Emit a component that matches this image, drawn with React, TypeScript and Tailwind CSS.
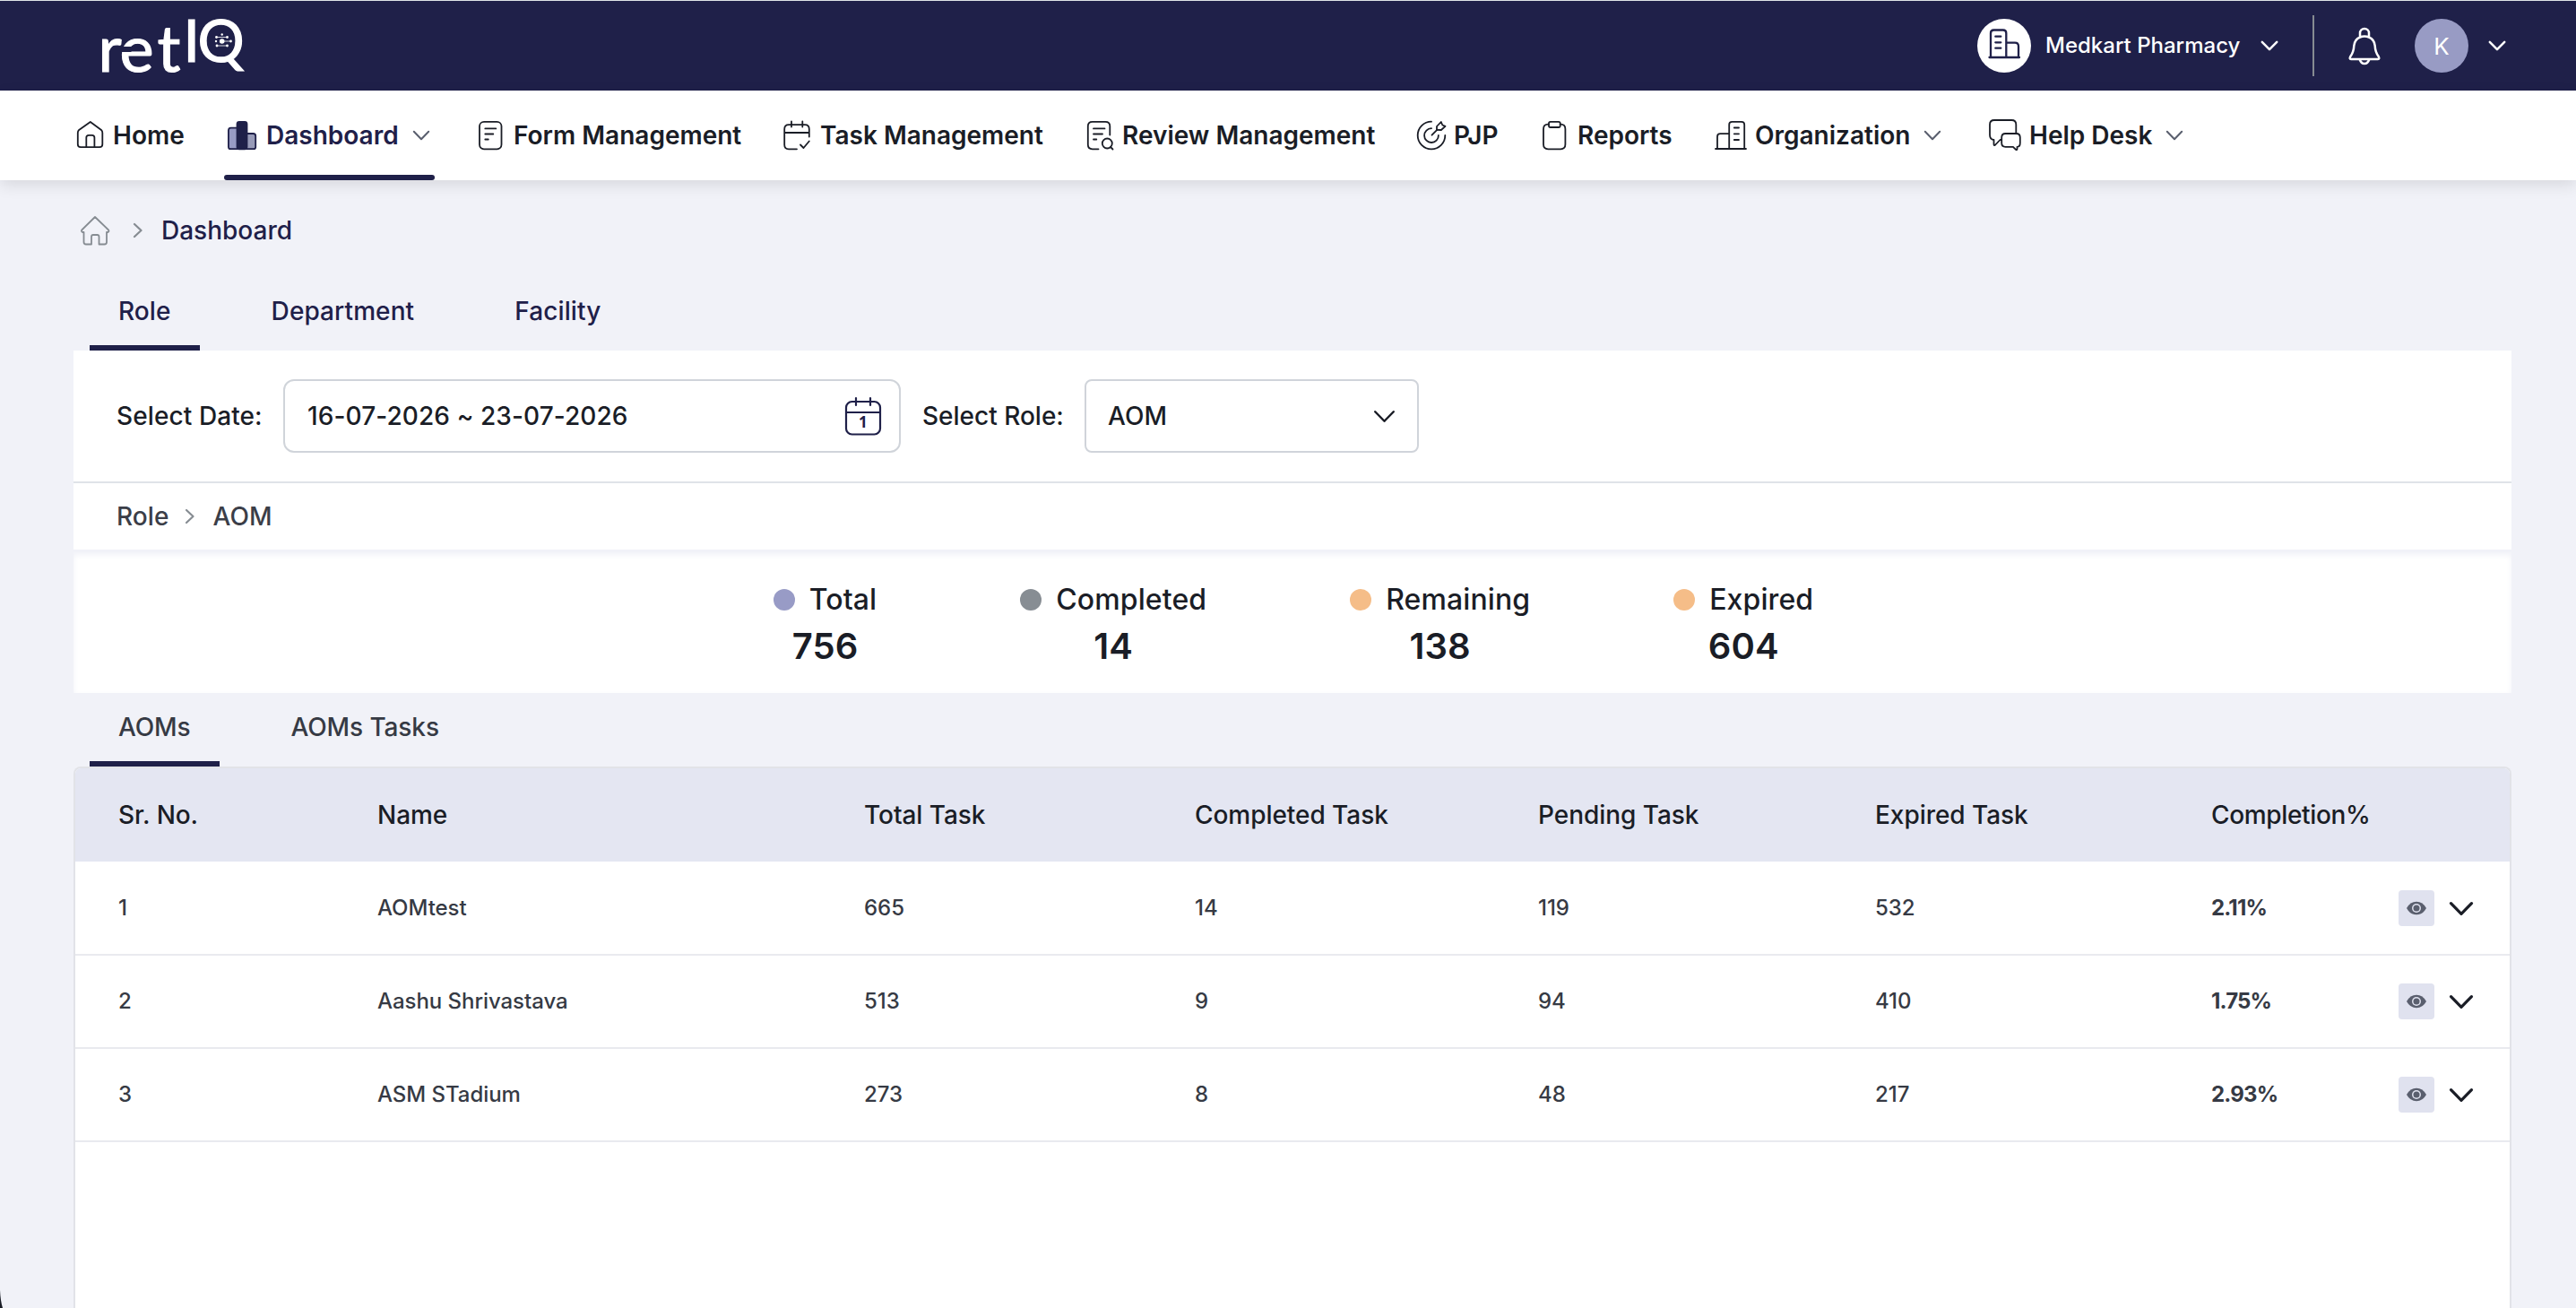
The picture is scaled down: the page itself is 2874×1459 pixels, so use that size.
import React, { useState } from 'react';

interface NavItem {
  label: string;
  width: string;
  gap: string;
  icon: React.ReactNode;
  active?: boolean;
  hasMenu?: boolean;
}

interface StatItem {
  label: string;
  value: number;
  dot: string;
}

interface TaskRow {
  id: number;
  name: string;
  total: number;
  completed: number;
  pending: number;
  expired: number;
  completion: string;
}

interface TabsProps {
  items: string[];
  active: string;
  onChange: (tab: string) => void;
  className: string;
}

const NavIcon: React.FC<{ children: React.ReactNode }> = ({ children }) => (
  <svg
    viewBox="0 0 40 40"
    className="w-10 h-10 shrink-0"
    fill="none"
    stroke="currentColor"
    strokeWidth="1.8"
    strokeLinecap="round"
    strokeLinejoin="round"
  >
    {children}
  </svg>
);

const ChevronDown: React.FC<{ className: string; strokeWidth?: number }> = ({ className, strokeWidth = 2 }) => (
  <svg
    viewBox="0 0 20 12"
    className={className}
    fill="none"
    stroke="currentColor"
    strokeWidth={strokeWidth}
    strokeLinecap="round"
    strokeLinejoin="round"
  >
    <path d="M1.8 1.8 10 10.2 18.2 1.8" />
  </svg>
);

const ChevronRight: React.FC = () => (
  <svg
    viewBox="0 0 12 18"
    className="w-3 h-[18px] shrink-0 text-[#868c92]"
    fill="none"
    stroke="currentColor"
    strokeWidth="2.2"
    strokeLinecap="round"
    strokeLinejoin="round"
  >
    <path d="M2 2 9.5 9 2 16" />
  </svg>
);

const navItems: NavItem[] = [
  {
    label: 'Home',
    width: 'w-[170px]',
    gap: 'ml-[6px]',
    icon: (
      <NavIcon>
        <path d="M20.8 5 33 14q1.3 1.2 1.3 3v13q0 3.2-3.2 3.2H10q-3.2 0-3.2-3.2V17q0-1.8 1.3-3Z" />
        <path d="M16.3 33V22.5q0-2.7 2.7-2.7h3.7q2.7 0 2.7 2.7V33" />
      </NavIcon>
    ),
  },
  {
    label: 'Dashboard',
    width: 'w-[277px]',
    gap: 'ml-[7px]',
    active: true,
    hasMenu: true,
    icon: (
      <NavIcon>
        <path d="M15 11.7H7.5q-2.6 0-2.6 2.6V33q0 2.2 2.2 2.2H15Z" fill="#989bc4" />
        <path d="M25 18h7.5q2.7 0 2.7 2.7V33q0 2.2-2.2 2.2h-8Z" fill="#989bb8" />
        <rect x="14.5" y="4.8" width="11" height="30.5" rx="2.5" fill="currentColor" />
      </NavIcon>
    ),
  },
  {
    label: 'Form Management',
    width: 'w-[343px]',
    gap: 'ml-[6px]',
    icon: (
      <NavIcon>
        <rect x="8" y="4.8" width="24.5" height="30.5" rx="5" />
        <path d="M14.3 12.4h12M14.3 18.5h9M14.3 24.5h3.5" />
      </NavIcon>
    ),
  },
  {
    label: 'Task Management',
    width: 'w-[338px]',
    gap: 'ml-[5px]',
    icon: (
      <NavIcon>
        <path d="M32.8 21.5V13q0-4.8-4.8-4.8H10q-4.8 0-4.8 4.8v17.5q0 4.8 4.8 4.8h9M5.2 17h27.6M13 4.5v6M25.3 4.5v6" />
        <path d="m23 30.5 3.5 3.5 6.3-7.5" />
      </NavIcon>
    ),
  },
  {
    label: 'Review Management',
    width: 'w-[369px]',
    gap: 'ml-[4px]',
    icon: (
      <NavIcon>
        <path d="M30.3 19.5V9.8q0-5-5-5H10.8q-5 0-5 5v20.5q0 5 5 5H17.5" />
        <path d="M12 12.4h12.5M12 18.5h10M12 24.5h3.3" />
        <circle cx="27.3" cy="29" r="5.5" />
        <path d="m31 33 2.5 2.5" />
      </NavIcon>
    ),
  },
  {
    label: 'PJP',
    width: 'w-[137px]',
    gap: 'ml-[5px]',
    icon: (
      <NavIcon>
        <path d="M20 4.7A15.3 15.3 0 1 0 35.3 20" />
        <path d="M20 12.2A7.9 7.9 0 1 0 27.9 20M20.5 19.7l6-6" />
        <path d="M26 13.8V10l4.8-5 1.5 3.5 3.2 1.3-4.6 4.2Z" />
      </NavIcon>
    ),
  },
  {
    label: 'Reports',
    width: 'w-[197px]',
    gap: 'ml-[6px]',
    icon: (
      <NavIcon>
        <path d="M14 7.7h-.8q-5.2 0-5.2 5.2v17.2q0 5.2 5.2 5.2h14q5.2 0 5.2-5.2V12.9q0-5.2-5.2-5.2h-.5" />
        <rect x="14" y="4.8" width="12.7" height="6.2" rx="1.8" />
      </NavIcon>
    ),
  },
  {
    label: 'Organization',
    width: 'w-[306px]',
    gap: 'ml-[7px]',
    hasMenu: true,
    icon: (
      <NavIcon>
        <path d="M3 35h34M5 35V21.5q0-3.3 3.3-3.3h9.7M18.2 35V8q0-3.2 3.2-3.2h10.5q3.3 0 3.3 3.2V35" />
        <path d="M23.8 11.5h5.2M23.8 18.3h5.2M23.8 25h5.2" />
      </NavIcon>
    ),
  },
  {
    label: 'Help Desk',
    width: 'w-[260px]',
    gap: 'ml-[7px]',
    hasMenu: true,
    icon: (
      <NavIcon>
        <path d="M32.3 17V8q0-5-5-5H8Q3 3 3 8v11.5q0 5 4.5 5.5v5q.3 1.8 1.7.5L14.5 25H16" />
        <path d="M20.5 18h12q4.3 0 4.3 4.3v6.2q0 4.3-3.3 4.3v2.5q-.3 1.5-1.5.5l-3-3h-8.5q-4.3 0-4.3-4.3v-6.2q0-4.3 4.3-4.3Z" />
      </NavIcon>
    ),
  },
];

const stats: StatItem[] = [
  { label: 'Total', value: 756, dot: 'bg-[#989bc6]' },
  { label: 'Completed', value: 14, dot: 'bg-[#878d93]' },
  { label: 'Remaining', value: 138, dot: 'bg-[#f5bd88]' },
  { label: 'Expired', value: 604, dot: 'bg-[#f5bd88]' },
];

const rows: TaskRow[] = [
  { id: 1, name: 'AOMtest', total: 665, completed: 14, pending: 119, expired: 532, completion: '2.11%' },
  { id: 2, name: 'Aashu Shrivastava', total: 513, completed: 9, pending: 94, expired: 410, completion: '1.75%' },
  { id: 3, name: 'ASM STadium', total: 273, completed: 8, pending: 48, expired: 217, completion: '2.93%' },
];

const columns = ['Sr. No.', 'Name', 'Total Task', 'Completed Task', 'Pending Task', 'Expired Task', 'Completion%'];

const gridColumns = 'grid grid-cols-[289px_543px_369px_383px_376px_375px_1fr] items-center pl-[48px]';

const Logo: React.FC = () => (
  <svg viewBox="0 0 180 100" className="w-[180px] h-[100px] overflow-visible" fill="#ffffff" fontFamily="Lato, sans-serif">
    <g stroke="#ffffff" strokeWidth="1.2">
      <text x="-0.5" y="79" fontSize="72">r</text>
      <text x="23.5" y="79" fontSize="72">e</text>
      <text x="65.5" y="79" fontSize="72">t</text>
      <text x="94.5" y="68" fontSize="66">I</text>
      <text x="110.5" y="68" fontSize="65">Q</text>
    </g>
    {/* notch in the e */}
    <rect x="24" y="51" width="12.5" height="6" fill="#1f2049" />
    {/* network mark inside the Q */}
    <path d="M132 40.5h11M132 50h11M138 45h9" stroke="#ffffff" strokeWidth="0.8" />
    <circle cx="137.7" cy="45" r="2.8" />
    <circle cx="137.7" cy="37.5" r="1.2" />
    <circle cx="131.5" cy="40.5" r="1.4" />
    <circle cx="143.5" cy="40.5" r="1.4" />
    <circle cx="131" cy="45" r="1.2" />
    <circle cx="147.5" cy="45" r="1.4" />
    <circle cx="132" cy="50" r="1.4" />
    <circle cx="143.5" cy="50" r="1.4" />
  </svg>
);

const Header: React.FC = () => (
  <header className="flex items-center justify-between h-[101px] bg-[#1f2049] border-t border-[#dfe4e8] pl-[110px] pr-[78px] text-white">
    <Logo />
    <div className="flex items-center">
      <div className="flex items-center justify-center w-[60px] h-[60px] rounded-full bg-white text-[#1f2049]">
        <svg
          viewBox="0 0 60 60"
          className="w-[60px] h-[60px]"
          fill="none"
          stroke="currentColor"
          strokeWidth="2.3"
          strokeLinecap="round"
          strokeLinejoin="round"
        >
          <path d="M13.5 43h33.5M15 43V16q0-3.5 3.5-3.5h10.3q3.5 0 3.5 3.5v27M32.3 26.7h9.7q4 0 4 4V43" />
          <path d="M20.3 19.7h6M20.3 26.3h6M20.3 32.7h6" />
        </svg>
      </div>
      <span className="ml-4 w-[240px] text-2xl font-medium whitespace-nowrap">Medkart Pharmacy</span>
      <ChevronDown className="w-5 h-3" strokeWidth={2.5} />
      <div className="ml-[38px] w-[2px] h-[68px] bg-[#868b91]" />
      <svg
        viewBox="0 0 40 44"
        className="ml-[36px] w-10 h-11"
        fill="none"
        stroke="currentColor"
        strokeWidth="2.5"
        strokeLinecap="round"
        strokeLinejoin="round"
      >
        <path d="M15 12.5V8a5 5 0 0 1 10 0v4.5M15 12.5q-6 2.5-6.7 9.5-.3 7-4 12-1.5 3 .7 3h30q2.2 0 .7-3-3.7-5-4-12-.7-7-6.7-9.5-5-2-10 0Z" />
        <path d="M14.8 37.5q1.5 4.5 5.2 4.5t5.2-4.5" />
      </svg>
      <div className="ml-[36px] flex items-center justify-center w-[60px] h-[60px] rounded-full bg-[#989bc4] text-[26px]">
        K
      </div>
      <ChevronDown className="ml-[22px] w-5 h-3" strokeWidth={2.5} />
    </div>
  </header>
);

const NavBar: React.FC = () => (
  <nav className="relative flex h-[100px] bg-white pl-[80px] text-[#1a1d26] shadow-[0_6px_16px_rgba(0,0,0,0.1)]">
    {navItems.map((item) => (
      <div key={item.label} className={`${item.width} shrink-0`}>
        <div className={`relative inline-flex items-center h-[100px] ${item.active ? 'text-[#1f2049]' : ''}`}>
          {item.icon}
          <span className={`${item.gap} text-[28px] font-semibold whitespace-nowrap`}>{item.label}</span>
          {item.hasMenu && <ChevronDown className="ml-[15px] w-5 h-3 text-[#5a5f6e]" />}
          {item.active && <div className="absolute left-0 bottom-0 w-[235px] h-[6px] rounded-full bg-[#1f2049]" />}
        </div>
      </div>
    ))}
  </nav>
);

const Breadcrumb: React.FC = () => (
  <div className="flex items-center h-[111px] pl-[4px]">
    <svg
      viewBox="0 0 40 40"
      className="w-10 h-10 text-[#868c92]"
      fill="none"
      stroke="currentColor"
      strokeWidth="1.8"
      strokeLinejoin="round"
    >
      <path d="M20 5 35 19.5q1 1.5-.5 2.5H33v11q0 2.5-2.5 2.5H24.5V27q0-2-2-2h-4.5q-2 0-2 2v8.5H10q-2.5 0-2.5-2.5V22H6q-1.7-1-.7-2.5Z" />
    </svg>
    <span className="ml-[22px] mr-[20px]">
      <ChevronRight />
    </span>
    <span className="tracking-normal">Dashboard</span>
  </div>
);

const Tabs: React.FC<TabsProps> = ({ items, active, onChange, className }) => (
  <div className={`flex gap-12 pl-[18px] ${className}`}>
    {items.map((item) => (
      <button
        key={item}
        onClick={() => onChange(item)}
        className={`px-8 border-b-[6px] whitespace-nowrap ${
          item === active ? 'border-[#1f2049]' : 'border-transparent'
        }`}
      >
        {item}
      </button>
    ))}
  </div>
);

const Filters: React.FC = () => (
  <div className="flex items-center h-[148px] bg-white border-b-2 border-[#dfe3e8] pl-[48px] text-[#1a1d26]">
    <label className="w-[186px] whitespace-nowrap">Select Date:</label>
    <div className="flex items-center justify-between w-[689px] h-[82px] border-2 border-[#d0d4da] rounded-xl pl-[25px] pr-[18px]">
      <span>16-07-2026 ~ 23-07-2026</span>
      <svg
        viewBox="0 0 44 44"
        className="w-11 h-11 text-[#1f2049]"
        fill="none"
        stroke="currentColor"
        strokeWidth="2.2"
        strokeLinecap="round"
      >
        <rect x="3" y="6" width="38" height="36.5" rx="6.5" />
        <path d="M3 18h38M14 2v8M30 2v8" />
        <text
          x="22"
          y="35"
          fontSize="17"
          fontWeight="700"
          textAnchor="middle"
          fill="currentColor"
          stroke="none"
          fontFamily="Noto Sans, sans-serif"
        >
          1
        </text>
      </svg>
    </div>
    <label className="ml-[24px] w-[181px] whitespace-nowrap tracking-normal">Select Role:</label>
    <div className="flex items-center justify-between w-[373px] h-[82px] border-2 border-[#d0d4da] rounded-lg px-[24px]">
      <span>AOM</span>
      <ChevronDown className="w-[25px] h-[15px]" />
    </div>
  </div>
);

const Stats: React.FC = () => (
  <div className="flex justify-center gap-40 h-[160px] bg-white border-t-[3px] border-[#f1f2f8] shadow-[inset_0_3px_6px_#f1f2f8] pt-[29px] pl-[2px] text-[#1a1d26]">
    {stats.map((stat) => (
      <div key={stat.label} className="flex flex-col items-center">
        <div className="flex items-center gap-4 h-[48px] text-[32px]">
          <span className={`w-6 h-6 rounded-full ${stat.dot}`} />
          <span>{stat.label}</span>
        </div>
        <div className="text-[40px] leading-[56px] font-semibold">{stat.value}</div>
      </div>
    ))}
  </div>
);

const TaskTable: React.FC = () => (
  <div className="h-[604px] bg-white border-2 border-b-0 border-[#e2e3e8] rounded-t-lg">
    <div className={`${gridColumns} h-[104px] rounded-t-md bg-[#e4e6f2] tracking-[-0.05px] text-[#1a1d26]`}>
      {columns.map((column) => (
        <div key={column} className="last:tracking-[-0.35px]">
          {column}
        </div>
      ))}
    </div>
    <div className="pt-px">
      {rows.map((row) => (
        <div
          key={row.id}
          className={`${gridColumns} h-[104px] border-b-2 border-[#e9eaef] text-2xl tracking-[-0.05px] text-[#363a44]`}
        >
          <div>{row.id}</div>
          <div>{row.name}</div>
          <div>{row.total}</div>
          <div>{row.completed}</div>
          <div>{row.pending}</div>
          <div>{row.expired}</div>
          <div className="flex items-center">
            <span className="w-[209px] font-bold tracking-[-0.8px]">{row.completion}</span>
            <button className="flex items-center justify-center w-10 h-10 rounded-sm bg-[#e0e2ef]">
              <svg viewBox="0 0 24 16" className="w-6 h-4">
                <path d="M1 8Q5 .7 12 .7T23 8q-4 7.3-11 7.3T1 8Z" fill="#5a5f6e" />
                <circle cx="12" cy="8" r="5" fill="#e0e2ef" />
                <circle cx="12" cy="8" r="3.5" fill="#5a5f6e" />
              </svg>
            </button>
            <ChevronDown className="ml-[16px] w-[28px] h-[17px] text-[#1a1d26]" strokeWidth={2.3} />
          </div>
        </div>
      ))}
    </div>
  </div>
);

const App: React.FC = () => {
  const [groupTab, setGroupTab] = useState('Role');
  const [listTab, setListTab] = useState('AOMs');

  return (
    <div className="relative w-full h-[1459px] overflow-hidden bg-[#f1f2f8] font-['Inter',sans-serif] text-[#1f2049]">
      <Header />
      <NavBar />
      <main className="px-[82px] w-[2884px] text-[28px] font-medium tracking-[0.1px]">
        <Breadcrumb />
        <Tabs
          items={['Role', 'Department', 'Facility']}
          active={groupTab}
          onChange={setGroupTab}
          className="h-[79px] [&>button]:pb-[3px]"
        />
        <Filters />
        <div className="flex items-center h-[74px] bg-white pl-[48px] text-[#3b3e48]">
          <span>Role</span>
          <span className="ml-[17px] mr-[20px]">
            <ChevronRight />
          </span>
          <span>AOM</span>
        </div>
        <Stats />
        <Tabs
          items={['AOMs', 'AOMs Tasks']}
          active={listTab}
          onChange={setListTab}
          className="h-[82px] tracking-[-0.1px] text-[#363a44]"
        />
        <TaskTable />
      </main>
      {/* Rounded window corner */}
      <svg viewBox="0 0 4 20" className="absolute left-0 bottom-0 w-1 h-5">
        <path d="M0 0Q.5 12 3 20H0Z" fill="#1a1d26" />
      </svg>
    </div>
  );
};

export default App;
